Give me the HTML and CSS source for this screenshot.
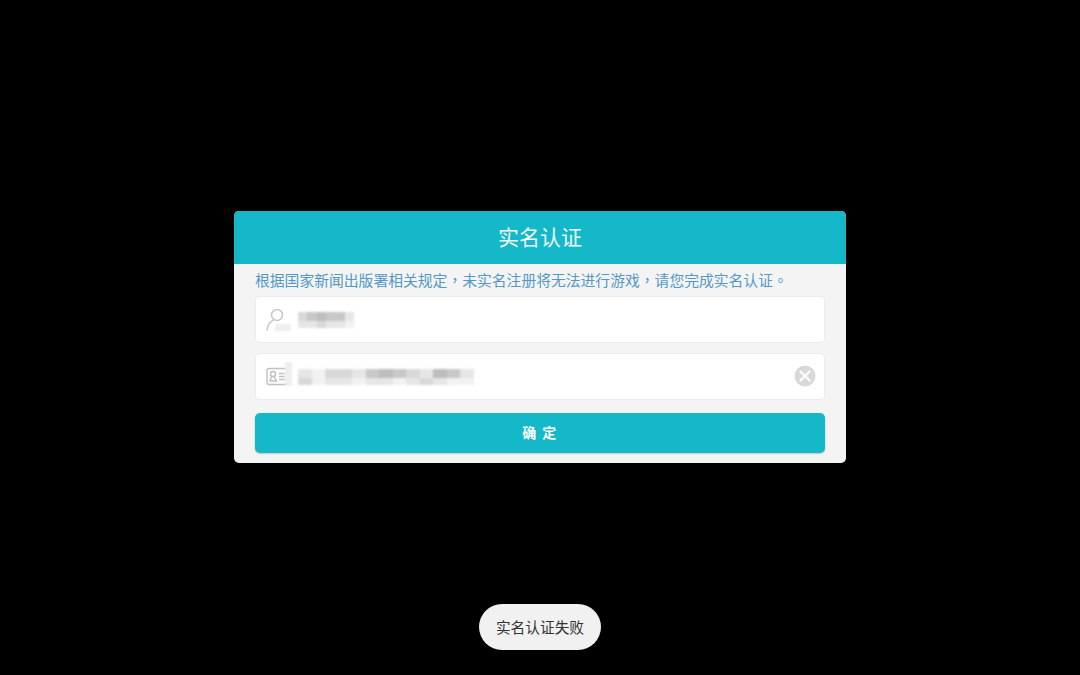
FILE: index.html
```html
<!DOCTYPE html>
<html lang="zh-CN">
<head>
<meta charset="utf-8">
<title>实名认证</title>
<link rel="stylesheet" href="styles.css">
</head>
<body>
<main class="dialog">
  <header class="dialog-head">实名认证</header>
  <div class="dialog-body">
    <p class="notice">根据国家新闻出版署相关规定<span class="punct" lang="zh-TW">，</span>未实名注册将无法进行游戏<span class="punct" lang="zh-TW">，</span>请您完成实名认证<span class="punct" lang="zh-TW">。</span></p>
    <div class="field">
      <svg class="field-icon" viewBox="0 0 26 26" fill="none" stroke="#c8c8c8" stroke-width="1.500" stroke-linecap="round"><circle cx="11" cy="8" r="5.500"/><path d="M1 23c.5-4.500 2.500-8 6-9.500"/><rect class="smudge" x="9" y="17" width="16" height="7" stroke="none"/></svg>
      <div class="mosaic mosaic-name">
        <div class="row"><span class="s2"></span><span class="s1"></span><span class="s3"></span><span class="s1"></span><span class="s1"></span><span class="s4"></span></div>
        <div class="row low"><span class="s4"></span><span class="s4"></span><span class="s2"></span><span class="s4"></span><span class="s4"></span><span class="s5"></span></div>
      </div>
    </div>
    <div class="field">
      <svg class="field-icon" viewBox="0 0 26 26" fill="none" stroke="#c0c0c0" stroke-width="1.400"><rect x="1" y="4.500" width="20" height="16" rx="2"/><circle cx="7" cy="10" r="2.500"/><path d="M6 12.500 3.500 17M8 12.500l2.500 4.500h-7M13 9.500h6M13 12.500h6M13 15.500h6"/><rect class="smudge" x="19" y="-2" width="7" height="24" stroke="none"/></svg>
      <div class="mosaic mosaic-id">
        <div class="row"><span class="s4"></span><span class="s5"></span><span class="s2"></span><span class="s2"></span><span class="s4"></span><span class="s1"></span><span class="s3"></span><span class="s1"></span><span class="s2"></span><span class="s4"></span><span class="s3"></span><span class="s1"></span><span class="s4"></span></div>
        <div class="row low"><span class="s2"></span><span class="s5"></span><span class="s4"></span><span class="s4"></span><span class="s5"></span><span class="s4"></span><span class="s4"></span><span class="s5"></span><span class="s4"></span><span class="s2"></span><span class="s4"></span><span class="s5"></span><span class="s5"></span></div>
      </div>
      <svg class="clear" viewBox="0 0 22 22"><circle cx="11" cy="11" r="10.500" fill="#d9d9d9"/><path d="M6.500 6.500l9 9M15.500 6.500l-9 9" stroke="#fff" stroke-width="2" stroke-linecap="round"/></svg>
    </div>
    <button class="confirm" type="button">确 定</button>
  </div>
</main>
<div class="toast">实名认证失败</div>
</body>
</html>
```
FILE: styles.css
```css
* { box-sizing: border-box; }
html, body { height: 100%; }
body {
  margin: 0;
  background: #000;
  display: flex;
  align-items: center;
  justify-content: center;
  font-family: "Noto Sans CJK SC", "Noto Sans", sans-serif;
}
.dialog {
  width: 612px;
  height: 252px;
  margin-top: -1px;
  border-radius: 5px;
  overflow: hidden;
  background: #f4f4f5;
  display: flex;
  flex-direction: column;
}
.dialog-head {
  height: 53px;
  flex: none;
  background: #15b8c8;
  color: #f2fbfc;
  font-size: 21px;
  line-height: 51px;
  text-align: center;
}
.dialog-body {
  padding: 0 21px;
  display: flex;
  flex-direction: column;
}
.notice {
  margin: 0;
  height: 32px;
  font-size: 14.800px;
  line-height: 31px;
  color: #5299c6;
  white-space: nowrap;
}
.punct { font-family: "Noto Sans CJK TC", sans-serif; }
.field {
  height: 47px;
  margin-bottom: 10px;
  padding: 0 10px;
  background: #fff;
  border: 1px solid #ececec;
  border-radius: 4px;
  display: flex;
  align-items: center;
  gap: 6px;
}
.field-icon { width: 26px; height: 26px; flex: none; overflow: visible; }
.smudge { fill: #eeeeee; filter: blur(1px); }
.mosaic {
  display: flex;
  flex-direction: column;
  height: 16px;
  filter: blur(1.200px);
}
.row { display: flex; flex: 9; }
.row.low { flex: 7; }
.row span { flex: 1; }
.s1 { background: #c8c8c8; }
.s2 { background: #d8d8d8; }
.s3 { background: #bdbdbd; }
.s4 { background: #e6e6e6; }
.s5 { background: #f2f2f2; }
.mosaic-name { width: 56px; }
.mosaic-id { width: 176px; }
.clear { width: 22px; height: 22px; margin: 0 -2px 1px auto; flex: none; }
.confirm {
  height: 40px;
  margin-top: 3px;
  padding: 0 0 3px;
  border: 0;
  border-radius: 5px;
  background: #15b8c8;
  box-shadow: 0 1px 2px rgba(0, 0, 0, .2);
  color: #fff;
  font-family: inherit;
  font-size: 14px;
  font-weight: 700;
  letter-spacing: 1.500px;
}
.toast {
  position: absolute;
  left: 479px;
  top: 604px;
  width: 122px;
  height: 46px;
  border-radius: 23px;
  background: #f1f1f2;
  color: #333;
  font-size: 14.700px;
  line-height: 46px;
  text-align: center;
  white-space: nowrap;
}
```
